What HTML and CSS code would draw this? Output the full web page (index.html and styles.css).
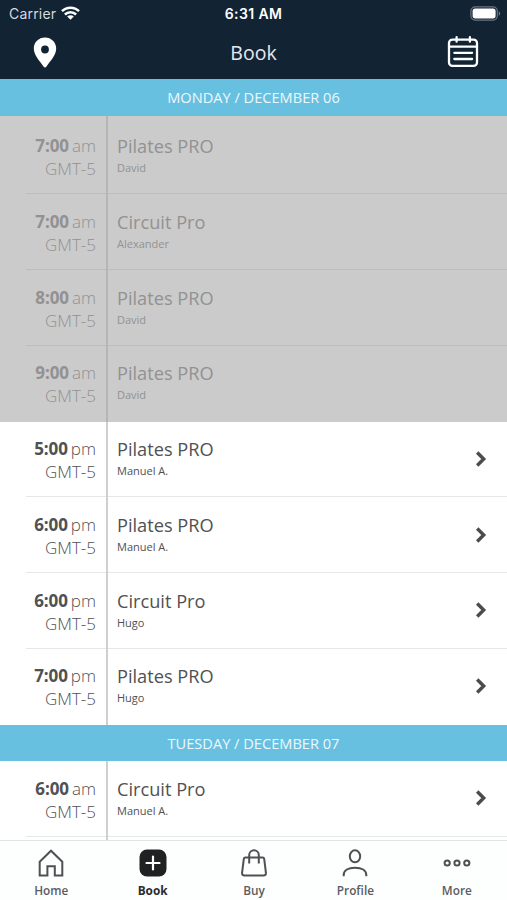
FILE: index.html
```html
<!DOCTYPE html>
<html lang="en">
<head>
    <meta charset="UTF-8">
    <meta name="viewport" content="width=device-width, initial-scale=1.0">
    <title>Book</title>
    <link rel="stylesheet" href="styles.css">
</head>
<body>
    <header class="header">
        <div class="status-bar">
            <div class="status-left">
                <span class="carrier">Carrier</span>
                <svg class="wifi" width="19" height="14" viewBox="0 0 19 14">
                    <path d="M1 5.200a12 12 0 0 1 17 0M3.900 8.500a7.900 7.900 0 0 1 11.200 0" fill="none" stroke="#fff" stroke-width="2.500"/>
                    <path d="M9.500 13.800L6.200 10.600a4.700 4.700 0 0 1 6.600 0z" fill="#fff"/>
                </svg>
            </div>
            <span class="clock">6:31 AM</span>
            <svg class="battery" width="31" height="15" viewBox="0 0 31 15">
                <rect x="0.9" y="0.9" width="26.4" height="13.200" rx="4.200" fill="none" stroke="#6b757f" stroke-width="1.200"/>
                <rect x="2.600" y="2.600" width="23" height="9.800" rx="2.600" fill="#fff"/>
                <path d="M28.800 5.200v4.600c1.500-.7 1.500-3.900 0-4.600z" fill="#8a929a"/>
            </svg>
        </div>
        <div class="title-bar">
            <svg class="pin" width="24" height="31" viewBox="0 0 24 31">
                <path fill-rule="evenodd" fill="#fff" d="M12 .5C5.600.5.8 5.400.8 11.600c0 6.400 5.600 12.200 9.700 17.800q1.500 2 3 0c4.100-5.600 9.700-11.400 9.700-17.800C23.200 5.400 18.400.5 12 .5zm0 8.100a3.900 3.900 0 1 1 0 7.800 3.900 3.900 0 0 1 0-7.800z"/>
            </svg>
            <h1 class="title">Book</h1>
            <svg class="calendar" width="32" height="32" viewBox="0 0 32 32" fill="none" stroke="#fff" stroke-width="2.300" stroke-linecap="round">
                <rect x="2" y="3.600" width="28" height="26.300" rx="3.500"/>
                <path d="M2 10.600h28M9.600 1.200v4.500M22.900 1.200v4.500M7.300 16.800h17.800M7.300 23h17.800"/>
            </svg>
        </div>
    </header>

    <main class="schedule">
        <h2 class="day">MONDAY / DECEMBER 06</h2>
        <div class="row past first">
            <div class="time"><div><b>7:00</b>am</div><div>GMT-5</div></div>
            <div class="info"><div class="name">Pilates PRO</div><div class="coach">David</div></div>
        </div>
        <div class="row past">
            <div class="time"><div><b>7:00</b>am</div><div>GMT-5</div></div>
            <div class="info"><div class="name">Circuit Pro</div><div class="coach">Alexander</div></div>
        </div>
        <div class="row past">
            <div class="time"><div><b>8:00</b>am</div><div>GMT-5</div></div>
            <div class="info"><div class="name">Pilates PRO</div><div class="coach">David</div></div>
        </div>
        <div class="row past last">
            <div class="time"><div><b>9:00</b>am</div><div>GMT-5</div></div>
            <div class="info"><div class="name">Pilates PRO</div><div class="coach">David</div></div>
        </div>
        <div class="row">
            <div class="time"><div><b>5:00</b>pm</div><div>GMT-5</div></div>
            <div class="info"><div class="name">Pilates PRO</div><div class="coach">Manuel A.</div></div>
            <svg class="arrow" width="12" height="18" viewBox="0 0 12 18"><path d="M2.200 2.500L8.700 9l-6.500 6.500"/></svg>
        </div>
        <div class="row">
            <div class="time"><div><b>6:00</b>pm</div><div>GMT-5</div></div>
            <div class="info"><div class="name">Pilates PRO</div><div class="coach">Manuel A.</div></div>
            <svg class="arrow" width="12" height="18" viewBox="0 0 12 18"><path d="M2.200 2.500L8.700 9l-6.500 6.500"/></svg>
        </div>
        <div class="row">
            <div class="time"><div><b>6:00</b>pm</div><div>GMT-5</div></div>
            <div class="info"><div class="name">Circuit Pro</div><div class="coach">Hugo</div></div>
            <svg class="arrow" width="12" height="18" viewBox="0 0 12 18"><path d="M2.200 2.500L8.700 9l-6.500 6.500"/></svg>
        </div>
        <div class="row last">
            <div class="time"><div><b>7:00</b>pm</div><div>GMT-5</div></div>
            <div class="info"><div class="name">Pilates PRO</div><div class="coach">Hugo</div></div>
            <svg class="arrow" width="12" height="18" viewBox="0 0 12 18"><path d="M2.200 2.500L8.700 9l-6.500 6.500"/></svg>
        </div>
        <h2 class="day">TUESDAY / DECEMBER 07</h2>
        <div class="row">
            <div class="time"><div><b>6:00</b>am</div><div>GMT-5</div></div>
            <div class="info"><div class="name">Circuit Pro</div><div class="coach">Manuel A.</div></div>
            <svg class="arrow" width="12" height="18" viewBox="0 0 12 18"><path d="M2.200 2.500L8.700 9l-6.500 6.500"/></svg>
        </div>
        <div class="row last">
            <div class="time"></div>
        </div>
    </main>

    <nav class="tabs">
        <a class="tab">
            <svg width="30" height="30" viewBox="0 0 30 30">
                <path d="M3.700 13.700L15 2.700l11.300 11V27.400h-7.500v-9.200h-7.400v9.200H3.700z"/>
            </svg>
            <span>Home</span>
        </a>
        <a class="tab active">
            <svg width="30" height="30" viewBox="0 0 30 30">
                <rect class="plus-box" x="1.500" y="1.500" width="27" height="27" rx="7.500"/>
                <path class="plus" d="M15 8.500v13M8.500 15h13"/>
            </svg>
            <span>Book</span>
        </a>
        <a class="tab">
            <svg width="30" height="30" viewBox="0 0 30 30">
                <path d="M6.400 9.500h17.200q1.400 0 1.600 1.400l1.700 13.800q.3 2.700-2.400 2.700h-19q-2.700 0-2.400-2.700L4.800 10.900q.2-1.400 1.600-1.400zM10.200 15.500V7a4.800 4.800 0 0 1 9.600 0v8.500"/>
            </svg>
            <span>Buy</span>
        </a>
        <a class="tab">
            <svg width="30" height="30" viewBox="0 0 30 30">
                <ellipse cx="15" cy="8.300" rx="5.200" ry="6"/>
                <path d="M3.700 28.200v-1.200c0-4.700 4.500-7.300 11.300-7.300s11.300 2.600 11.300 7.300v1.200"/>
            </svg>
            <span>Profile</span>
        </a>
        <a class="tab">
            <svg width="30" height="30" viewBox="0 0 30 30">
                <circle cx="5.200" cy="15" r="2.600"/>
                <circle cx="15" cy="15" r="2.600"/>
                <circle cx="24.800" cy="15" r="2.600"/>
            </svg>
            <span>More</span>
        </a>
    </nav>
</body>
</html>
```
FILE: styles.css
```css
* {
    box-sizing: border-box;
}
body {
    margin: 0;
    height: 900px;
    display: flex;
    flex-direction: column;
    overflow: hidden;
    background-color: #fff;
    font-family: "Open Sans", sans-serif;
}
.header {
    height: 79px;
    flex: none;
    background-color: #122334;
    color: #fff;
}
.status-bar {
    display: grid;
    grid-template-columns: 1fr auto 1fr;
    align-items: center;
    height: 27px;
    padding: 0 6px 0 9px;
    font-family: Inter, sans-serif;
    font-size: 14px;
}
.status-left {
    display: flex;
    align-items: center;
    gap: 5px;
}
.carrier {
    color: #d5dade;
    letter-spacing: 0.2px;
}
.wifi {
    margin-top: -2px;
}
.clock {
    margin-right: 3px;
    font-weight: 600;
    font-size: 14px;
    letter-spacing: 0.4px;
}
.battery {
    justify-self: end;
}
.title-bar {
    display: grid;
    grid-template-columns: 1fr auto 1fr;
    align-items: center;
    height: 50px;
    padding: 0 28px 0 33px;
}
.title {
    margin: 0 5px 0 0;
    font-size: 19.5px;
    font-weight: 400;
    color: #e6eaed;
}
.calendar {
    justify-self: end;
}
.schedule {
    flex: 1;
    min-height: 0;
    overflow: hidden;
}
.day {
    margin: 0;
    height: 36.5px;
    line-height: 36px;
    background-color: #67c0e0;
    color: #edf8fc;
    font-size: 14.6px;
    font-weight: 400;
    text-align: center;
}
.row {
    display: flex;
    align-items: stretch;
    height: 75.75px;
    padding-left: 26px;
    color: #505153;
    background: linear-gradient(#e7e7e7, #e7e7e7) 26px 100% / 100% 1px no-repeat;
}
.row.past {
    background-color: #cbcbcb;
    background-image: linear-gradient(#bdbdbd, #bdbdbd);
    color: #929292;
}
.row.last {
    background-image: none;
}
.row.first {
    height: 78.75px;
}
.first .time,
.first .info {
    padding-top: 18.5px;
}
.time {
    width: 82px;
    padding: 15.5px 10px 0 0;
    border-right: 2px solid #cfcfcf;
    font-size: 17px;
    font-weight: 300;
    line-height: 23px;
    text-align: right;
    white-space: nowrap;
}
.past .time {
    border-color: #b5b5b5;
}
.time b {
    margin-right: 3px;
    font-weight: 700;
    letter-spacing: -0.1px;
}
.info {
    flex: 1;
    padding: 15.5px 0 0 9px;
}
.name {
    font-size: 18.2px;
    line-height: 25px;
}
.coach {
    font-size: 11px;
    line-height: 18px;
}
.arrow {
    align-self: center;
    margin: -1px 20px 0 0;
    fill: none;
    stroke: #4b4c4d;
    stroke-width: 3.4;
}
.tabs {
    display: grid;
    grid-template-columns: repeat(5, 1fr);
    height: 60px;
    flex: none;
    border-top: 1px solid #e3e3e3;
    background-color: #fdfefe;
}
.tab {
    display: flex;
    flex-direction: column;
    align-items: center;
    padding: 7px 0 0 1px;
    color: #5a5c5e;
    font-size: 11.8px;
    font-weight: 600;
    line-height: 25px;
}
.tab svg {
    flex: none;
    fill: none;
    stroke: #4e5053;
    stroke-width: 2;
}
.active {
    color: #2b2c2e;
    font-weight: 700;
}
.tab .plus-box {
    fill: #202123;
    stroke: none;
}
.tab .plus {
    stroke: #fff;
    stroke-width: 2.2;
    stroke-linecap: round;
}
```
